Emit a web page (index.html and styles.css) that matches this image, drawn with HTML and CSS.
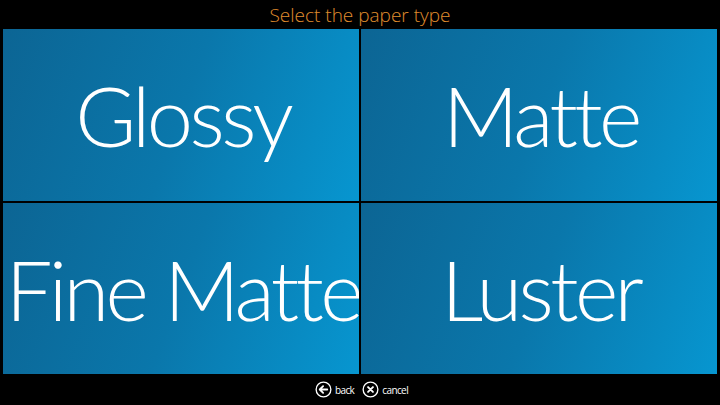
FILE: index.html
```html
<!DOCTYPE html>
<html>
<head>
<meta charset="utf-8">
<link rel="stylesheet" href="styles.css">
</head>
<body>
<div class="screen">
  <header class="title">Select the paper type</header>
  <main class="tiles">
    <div class="tile"><span>Glossy</span></div>
    <div class="tile"><span>Matte</span></div>
    <div class="tile"><span>Fine Matte</span></div>
    <div class="tile"><span>Luster</span></div>
  </main>
  <footer class="nav">
    <div class="btn">
      <svg class="ico" viewBox="0 0 18 18" width="17" height="17">
        <circle cx="9" cy="9" r="7.8" fill="none" stroke="#fff" stroke-width="1.4"/>
        <path d="M13 9H5.2M8.6 5.4L5 9l3.6 3.6" fill="none" stroke="#fff" stroke-width="1.9" stroke-linecap="round" stroke-linejoin="round"/>
      </svg>
      <span>back</span>
    </div>
    <div class="btn">
      <svg class="ico" viewBox="0 0 18 18" width="17" height="17">
        <circle cx="9" cy="9" r="7.8" fill="none" stroke="#fff" stroke-width="1.4"/>
        <path d="M6.4 6.4l5.2 5.2M11.6 6.4l-5.2 5.2" fill="none" stroke="#fff" stroke-width="2" stroke-linecap="round"/>
      </svg>
      <span>cancel</span>
    </div>
  </footer>
</div>
</body>
</html>
```

FILE: styles.css
```css
html, body {
  margin: 0;
  padding: 0;
  background: #000;
}
.screen {
  width: 720px;
  height: 405px;
  display: flex;
  flex-direction: column;
  font-family: "Open Sans", "DejaVu Sans", sans-serif;
}
.title {
  height: 29px;
  display: flex;
  align-items: center;
  justify-content: center;
  color: #e08e2e;
  font-size: 19px;
  font-weight: 300;
  box-sizing: border-box;
}
.tiles {
  display: grid;
  grid-template-columns: 356px 356px;
  grid-template-rows: 172px 171px;
  gap: 2px;
  padding-left: 3px;
}
.tile {
  background: linear-gradient(110deg, #0c6594 0%, #0a77ab 50%, #0796d0 100%);
  display: flex;
  align-items: center;
  justify-content: center;
  overflow: hidden;
  white-space: nowrap;
  color: #fff;
  font-family: Lato, "Open Sans", sans-serif;
  font-size: 83px;
  font-weight: 300;
  letter-spacing: -3.6px;
}
.tile span {
  margin-right: -3.6px;
}
.nav {
  flex: 1;
  display: flex;
  justify-content: center;
  align-items: center;
  gap: 8px;
  padding-left: 3px;
}
.btn {
  display: flex;
  align-items: center;
  gap: 3px;
  color: #fff;
  font-size: 10px;
  letter-spacing: -0.6px;
}
.ico {
  display: block;
}
```
